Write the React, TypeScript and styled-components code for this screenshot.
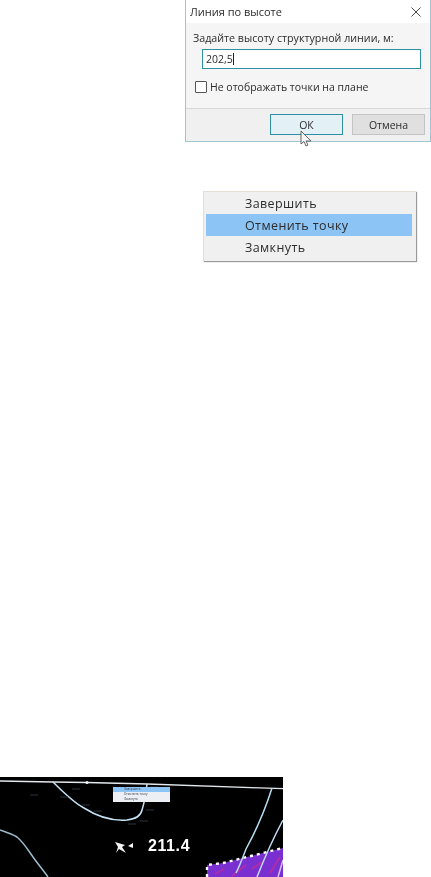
import React from 'react';
import styled, { createGlobalStyle } from 'styled-components';

const Global = createGlobalStyle`
  html, body { margin: 0; padding: 0; background: #fff; }
  body { font-family: "Open Sans", "Noto Sans", sans-serif; overflow: hidden; }
`;

const Page = styled.div`
  width: 431px;
  height: 877px;
  display: flex;
  flex-direction: column;
  overflow: hidden;
`;

const Dialog = styled.div`
  width: 246px;
  height: 142px;
  margin-left: 185px;
  box-sizing: border-box;
  border: 1px solid #9fc4d2;
  border-top: 0;
  background: #fff;
  display: flex;
  flex-direction: column;
  color: #2c2c2c;
  filter: blur(0.3px);
`;

const TitleBar = styled.div`
  height: 23px;
  display: flex;
  align-items: center;
  justify-content: space-between;
  padding: 0 9px 0 4px;
  font-size: 11px;
`;

const DialogBody = styled.div`
  flex: 1;
  background: #f5f5f5;
  padding: 8px 9px 0 7px;
  font-size: 10.7px;
  display: flex;
  flex-direction: column;
`;

const Field = styled.div`
  height: 20px;
  margin: 4px 0 0 9px;
  box-sizing: border-box;
  border: 1px solid #2f8fa5;
  background: #fff;
  display: flex;
  align-items: center;
  padding-left: 3px;
  font-size: 10.5px;
`;

const Caret = styled.span`
  width: 1px;
  height: 12px;
  background: #222;
`;

const CheckRow = styled.label`
  display: flex;
  align-items: center;
  gap: 3px;
  margin: 11px 0 0 2px;
  font-size: 10.5px;
`;

const CheckBox = styled.span`
  width: 12px;
  height: 12px;
  box-sizing: border-box;
  border: 1px solid #555;
  background: #fff;
  border-radius: 1px;
`;

const ButtonBar = styled.div`
  height: 33px;
  box-sizing: border-box;
  border-top: 1px solid #d8d8d8;
  background: #f0f0f0;
  display: flex;
  justify-content: flex-end;
  align-items: flex-start;
  gap: 9px;
  padding: 5px 5px 0 0;
`;

const Button = styled.div<{ $primary?: boolean }>`
  position: relative;
  width: 73px;
  height: 21px;
  box-sizing: border-box;
  border: 1px solid ${p => (p.$primary ? '#2f8fa5' : '#c4c4c4')};
  background: ${p => (p.$primary ? '#e3f0f6' : '#e0e0e0')};
  display: flex;
  align-items: center;
  justify-content: center;
  font-size: 10.5px;
`;

const Cursor = styled.svg`
  position: absolute;
  left: 29px;
  top: 15px;
`;

const Menu = styled.div`
  width: 213px;
  height: 70px;
  margin: 49px 0 0 203px;
  box-sizing: border-box;
  padding: 0 4px 0 2px;
  background: #f1f0f0;
  border-top: 1px solid #e3dfd5;
  border-left: 1px solid #e3dfd5;
  box-shadow: 1px 1px 1px #9a9a9a;
  display: flex;
  flex-direction: column;
  color: #2c2c2c;
  filter: blur(0.3px);
`;

const MenuItem = styled.div<{ $active?: boolean }>`
  height: 22px;
  flex: none;
  display: flex;
  align-items: center;
  padding-left: 39px;
  font-size: 12.5px;
  letter-spacing: 0.4px;
  background: ${p => (p.$active ? '#8cc4f6' : 'transparent')};
`;

const MapWrap = styled.div`
  width: 283px;
  height: 100px;
  margin-top: 516px;
  overflow: hidden;
  background: #000;
  filter: blur(0.6px);
  position: relative;
`;

const MiniMenu = styled.div`
  position: absolute;
  left: 113px;
  top: 10px;
  width: 57px;
  height: 15px;
  background: #eceff3;
  display: flex;
  flex-direction: column;
  font-size: 3px;
  color: #334;
`;

const MiniItem = styled.div<{ $active?: boolean }>`
  height: 5px;
  line-height: 5px;
  padding-left: 11px;
  background: ${p => (p.$active ? '#8cc4f6' : 'transparent')};
`;

const Elevation = styled.div`
  position: absolute;
  left: 148px;
  top: 60px;
  font-family: "Liberation Sans", sans-serif;
  font-weight: 700;
  font-size: 16px;
  letter-spacing: 0.6px;
  color: #fff;
`;

const labels: [number, number][] = [
  [60, 20], [30, 18], [82, 28], [94, 34], [128, 47], [140, 44], [146, 33], [150, 10], [72, 12],
];

export default function App() {
  return (
    <Page>
      <Global />
      <Dialog>
        <TitleBar>
          <span>Линия по высоте</span>
          <svg width="10" height="10" viewBox="0 0 10 10">
            <path d="M0.5 0.5 L9.5 9.5 M9.5 0.5 L0.5 9.5" stroke="#444" strokeWidth="1" fill="none" />
          </svg>
        </TitleBar>
        <DialogBody>
          <span>Задайте высоту структурной линии, м:</span>
          <Field>202,5<Caret /></Field>
          <CheckRow><CheckBox />Не отображать точки на плане</CheckRow>
        </DialogBody>
        <ButtonBar>
          <Button $primary>
            ОК
            <Cursor width="14" height="17" viewBox="0 0 14 17">
              <path d="M1 1 L1 14 L4 11.5 L6 16 L8 15 L6 11 L11 11 Z" fill="#f6f6f6" stroke="#444" strokeWidth="0.8" />
            </Cursor>
          </Button>
          <Button>Отмена</Button>
        </ButtonBar>
      </Dialog>

      <Menu>
        <MenuItem>Завершить</MenuItem>
        <MenuItem $active>Отменить точку</MenuItem>
        <MenuItem>Замкнуть</MenuItem>
      </Menu>

      <MapWrap>
        <svg width="283" height="100" viewBox="0 0 283 100">
          <path d="M0 4 L53 5 L87 5.5 L147 7 L283 11.7" stroke="#e2e8ec" strokeWidth="1.3" fill="none" />
          <circle cx="87" cy="5.5" r="1.6" fill="#eef2f4" />
          <path d="M53 5 C64 16 74 26 84 31 C98 40 114 44 127 43 C136 42 141 38 142 33 C145 24 146 15 147 7" stroke="#c4e2f2" strokeWidth="1.5" fill="none" />
          <path d="M0 53 C6 55 12 57 17 60 C24 66 28 73 33 80 C38 87 43 93 48 100" stroke="#9cbccc" strokeWidth="1.5" fill="none" />
          <path d="M207 100 L207 88 L223 86 L243 81 L263 76 L283 71 L283 100 Z" fill="#7a30d0" />
          <path d="M215 97 L224 92 M232 99 L246 88 M252 92 L262 85 M270 96 L280 80" stroke="#b02ca8" strokeWidth="2" fill="none" />
          <path d="M207 100 L207 88 L223 86 L243 81 L263 76 L283 71" stroke="#fff" strokeWidth="2.4" strokeDasharray="3 4" fill="none" />
          <path d="M272 11 C266 30 258 50 246 72 C243 80 240 88 236 96" stroke="#b4dcf0" strokeWidth="1.5" fill="none" />
          <path d="M283 43 C276 56 268 72 257 100" stroke="#c0dcf6" strokeWidth="1.5" fill="none" />
          <path d="M283 83 L278 100" stroke="#d4c2f4" strokeWidth="1.5" fill="none" />
          <path d="M115 65 L125 68 L122 70 L126 76 L119 72 L116 76 L118 70 Z" fill="#f4f4f4" />
          <path d="M128 69 L133 66 L133 71 Z" fill="#f4f4f4" />
          {labels.map(([x, y]) => (
            <path key={`${x}-${y}`} d={`M${x} ${y} h8`} stroke="#2a343c" strokeWidth="1" />
          ))}
        </svg>
        <MiniMenu>
          <MiniItem $active>Завершить</MiniItem>
          <MiniItem>Отменить точку</MiniItem>
          <MiniItem>Замкнуть</MiniItem>
        </MiniMenu>
        <Elevation>211.4</Elevation>
      </MapWrap>
    </Page>
  );
}
